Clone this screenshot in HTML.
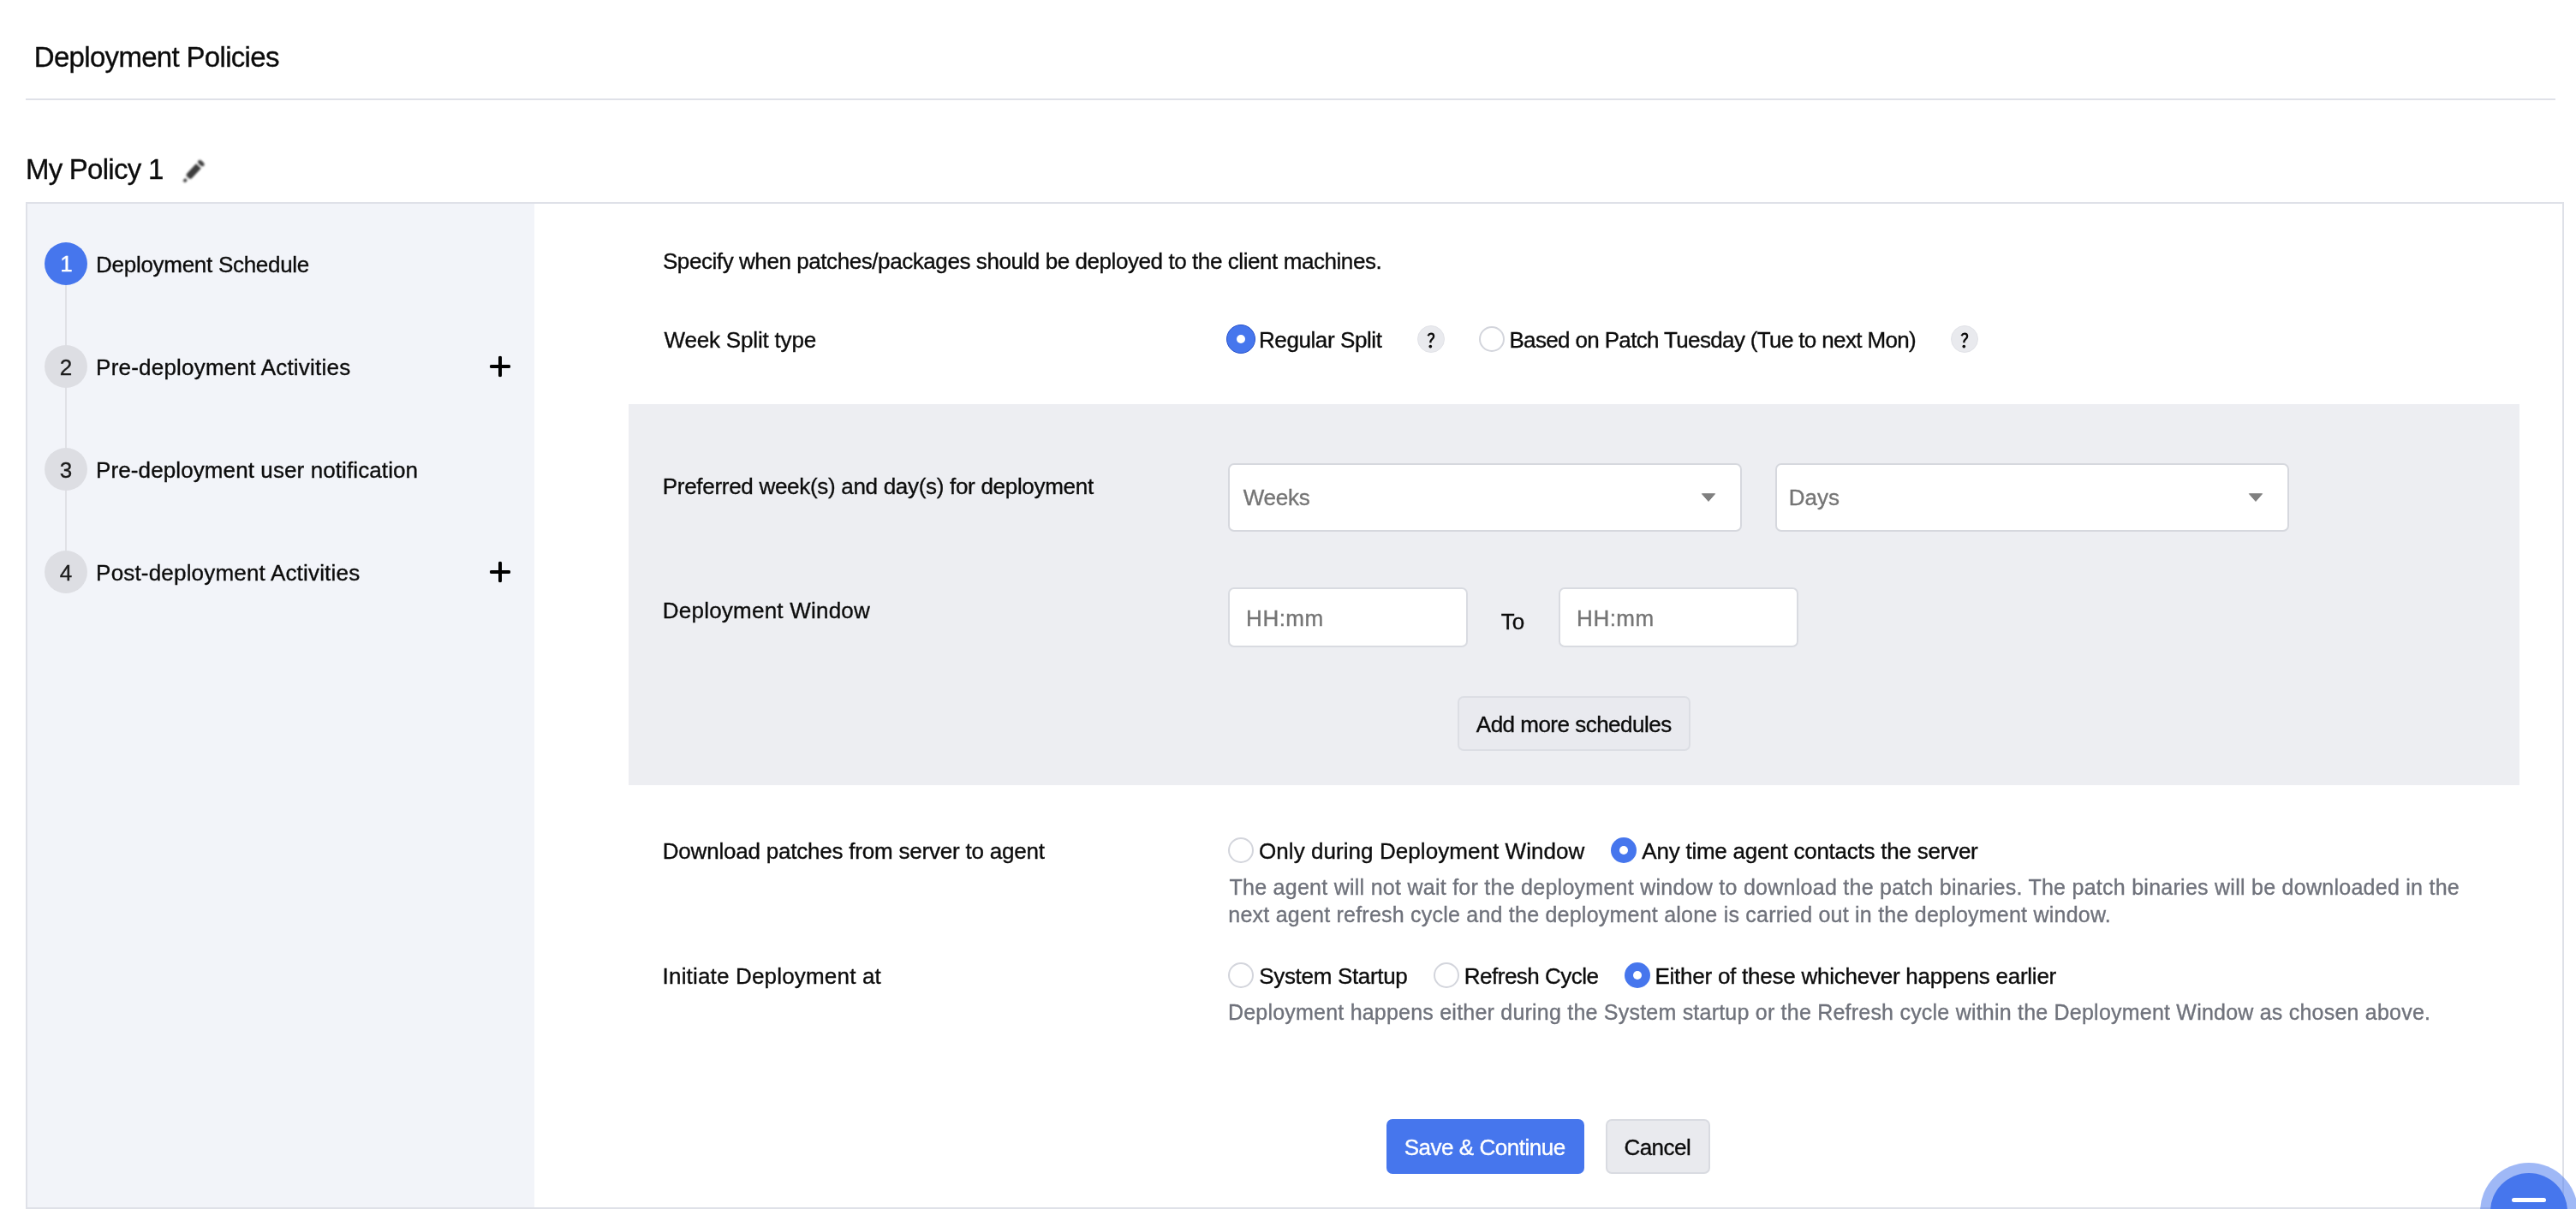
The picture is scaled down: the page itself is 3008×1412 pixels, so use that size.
<!DOCTYPE html>
<html lang="en"><head><meta charset="utf-8"><title>Deployment Policies</title>
<style>
html,body{margin:0;padding:0;background:#fff;overflow:hidden;}
body{width:3008px;height:1412px;position:relative;font-family:"Liberation Sans",sans-serif;}
.t{-webkit-text-stroke:0.35px;position:absolute;white-space:nowrap;line-height:1;font-family:"Liberation Sans",sans-serif;}
.a{position:absolute;box-sizing:border-box;}
.circ{position:absolute;box-sizing:border-box;border-radius:50%;}
svg{position:absolute;overflow:visible;}
#txt{position:absolute;left:0;top:0;width:3008px;height:1412px;will-change:transform;}
#page{position:relative;width:3008px;height:1412px;overflow:hidden;background:#fff;}

</style></head>
<body>
<div id="page">
<!-- header rule -->
<div class="a" style="left:30px;top:115px;width:2954px;height:2px;background:#dfe1e8"></div>
<!-- panel -->
<div class="a" style="left:30px;top:236px;width:2964px;height:1176px;border:2px solid #dfe1e8;background:#fff"></div>
<!-- sidebar -->
<div class="a" style="left:32px;top:238px;width:592px;height:1172px;background:#f2f4f9"></div>
<!-- stepper line -->
<div class="a" style="left:76px;top:308px;width:2px;height:360px;background:#e0e1e6"></div>
<div class="circ" style="left:52px;top:283px;width:50px;height:50px;background:#4676ed"></div>
<div class="circ" style="left:52px;top:403px;width:50px;height:50px;background:#dddee3"></div>
<div class="circ" style="left:52px;top:523px;width:50px;height:50px;background:#dddee3"></div>
<div class="circ" style="left:52px;top:643px;width:50px;height:50px;background:#dddee3"></div>
<!-- plus icons -->
<svg style="left:572px;top:416px" width="24" height="24" viewBox="0 0 24 24"><path d="M12 1.8v20.4M1.8 12h20.4" stroke="#000" stroke-width="3.9" stroke-linecap="round" fill="none"/><path d="M12 0.6v22.8M0.6 12h22.8" stroke="#000" stroke-width="3.2" fill="none"/></svg>
<svg style="left:572px;top:656px" width="24" height="24" viewBox="0 0 24 24"><path d="M12 1.8v20.4M1.8 12h20.4" stroke="#000" stroke-width="3.9" stroke-linecap="round" fill="none"/><path d="M12 0.6v22.8M0.6 12h22.8" stroke="#000" stroke-width="3.2" fill="none"/></svg>
<!-- pencil -->
<svg style="left:0;top:0" width="300" height="260" viewBox="0 0 300 260">
 <defs><filter id="bl" x="-30%" y="-30%" width="160%" height="160%"><feGaussianBlur stdDeviation="1.05"/></filter></defs>
 <g transform="translate(216.2,210.7) rotate(-47)" fill="#3d3d3d" filter="url(#bl)">
  <ellipse cx="0" cy="0" rx="2.4" ry="2"/>
  <path d="M4.8 -2.4 L6.6 -3.9 H23.0 V3.9 H6.6 L4.8 2.4z"/>
  <ellipse cx="27.4" cy="0" rx="2.5" ry="4.4"/>
 </g>
</svg>
<!-- week split radios -->
<div class="circ" style="left:1432px;top:379px;width:34px;height:34px;background:#4676ed;border:1.5px solid #2752cc"></div>
<div class="circ" style="left:1443.8px;top:390.8px;width:10.4px;height:10.4px;background:#fff"></div>
<div class="circ" style="left:1655px;top:380px;width:32px;height:32px;background:#e9eaee;border:1px solid #e2e3e8"></div>
<div class="circ" style="left:1727px;top:381px;width:30px;height:30px;background:#fff;border:2px solid #d3d5dc"></div>
<div class="circ" style="left:2278px;top:380px;width:32px;height:32px;background:#e9eaee;border:1px solid #e2e3e8"></div>
<svg style="left:1665.7px;top:388.1px" width="10" height="19" viewBox="0 0 10 19"><path d="M1.5 4.2C2.4 2.55 3.6 1.6 5 1.6C6.9 1.6 8.15 2.9 8.15 4.7C8.15 6.4 7.2 7.3 6 8.3C5 9.1 4.4 9.8 4.4 11V12.3" stroke="#0c0c0c" stroke-width="2.3" fill="none"/><circle cx="4.3" cy="16.55" r="1.85" fill="#0c0c0c"/></svg>
<svg style="left:2289.3px;top:388.1px" width="10" height="19" viewBox="0 0 10 19"><path d="M1.5 4.2C2.4 2.55 3.6 1.6 5 1.6C6.9 1.6 8.15 2.9 8.15 4.7C8.15 6.4 7.2 7.3 6 8.3C5 9.1 4.4 9.8 4.4 11V12.3" stroke="#0c0c0c" stroke-width="2.3" fill="none"/><circle cx="4.3" cy="16.55" r="1.85" fill="#0c0c0c"/></svg>
<!-- grey schedule box -->
<div class="a" style="left:734px;top:472px;width:2208px;height:445px;background:#edeef2"></div>
<div class="a" style="left:1434px;top:541px;width:600px;height:80px;background:#fff;border:2px solid #d6d8de;border-radius:7px"></div>
<div class="a" style="left:2073px;top:541px;width:600px;height:80px;background:#fff;border:2px solid #d6d8de;border-radius:7px"></div>
<svg style="left:1986px;top:576px" width="18" height="10" viewBox="0 0 18 10"><path d="M1.4 0.7H16.6L9 9.4z" fill="#808080" stroke="#808080" stroke-width="1" stroke-linejoin="round"/></svg>
<svg style="left:2625px;top:576px" width="18" height="10" viewBox="0 0 18 10"><path d="M1.4 0.7H16.6L9 9.4z" fill="#808080" stroke="#808080" stroke-width="1" stroke-linejoin="round"/></svg>
<div class="a" style="left:1434px;top:686px;width:280px;height:70px;background:#fff;border:2px solid #d9dbe1;border-radius:7px"></div>
<div class="a" style="left:1820px;top:686px;width:280px;height:70px;background:#fff;border:2px solid #d9dbe1;border-radius:7px"></div>
<div class="a" style="left:1702px;top:813px;width:272px;height:64px;background:#e9eaef;border:2px solid #dcdee4;border-radius:7px"></div>
<!-- download radios -->
<div class="circ" style="left:1434px;top:978px;width:30px;height:30px;background:#fff;border:2px solid #d3d5dc"></div>
<div class="circ" style="left:1881px;top:978px;width:30px;height:30px;background:#4676ed"></div>
<div class="circ" style="left:1890.8px;top:987.8px;width:10.4px;height:10.4px;background:#fff"></div>
<!-- initiate radios -->
<div class="circ" style="left:1434px;top:1124px;width:30px;height:30px;background:#fff;border:2px solid #d3d5dc"></div>
<div class="circ" style="left:1674px;top:1124px;width:30px;height:30px;background:#fff;border:2px solid #d3d5dc"></div>
<div class="circ" style="left:1897px;top:1124px;width:30px;height:30px;background:#4676ed"></div>
<div class="circ" style="left:1906.8px;top:1133.8px;width:10.4px;height:10.4px;background:#fff"></div>
<!-- buttons -->
<div class="a" style="left:1619px;top:1307px;width:231px;height:64px;background:#4676ed;border-radius:7px"></div>
<div class="a" style="left:1875px;top:1307px;width:122px;height:64px;background:#e9eaee;border:2px solid #d9dbe1;border-radius:7px"></div>
<!-- floating chat button -->
<div class="circ" style="left:2896px;top:1358px;width:114px;height:114px;background:rgba(70,118,237,.52)"></div>
<div class="circ" style="left:2908px;top:1370px;width:90px;height:90px;background:#4676ed"></div>
<div class="a" style="left:2933px;top:1399px;width:40px;height:5px;background:#fff;border-radius:3px"></div>

<div id="txt">
<div class="t" style="left:39.78px;top:50px;font-size:33px;color:#0c0c0c;letter-spacing:-0.684px">Deployment Policies</div>
<div class="t" style="left:29.88px;top:181px;font-size:33px;color:#0c0c0c;letter-spacing:-0.732px">My Policy 1</div>
<div class="t" style="left:112.11px;top:296px;font-size:26px;color:#0c0c0c;letter-spacing:-0.289px">Deployment Schedule</div>
<div class="t" style="left:112.11px;top:416px;font-size:26px;color:#0c0c0c;letter-spacing:0.215px">Pre-deployment Activities</div>
<div class="t" style="left:112.11px;top:536px;font-size:26px;color:#0c0c0c;letter-spacing:0.099px">Pre-deployment user notification</div>
<div class="t" style="left:112.11px;top:656px;font-size:26px;color:#0c0c0c;letter-spacing:0.182px">Post-deployment Activities</div>
<div class="t" style="left:773.94px;top:292px;font-size:26px;color:#0c0c0c;letter-spacing:-0.427px">Specify when patches/packages should be deployed to the client machines.</div>
<div class="t" style="left:775.53px;top:384px;font-size:26px;color:#0c0c0c;letter-spacing:-0.179px">Week Split type</div>
<div class="t" style="left:1470.01px;top:384px;font-size:26px;color:#0c0c0c;letter-spacing:-0.414px">Regular Split</div>
<div class="t" style="left:1762.41px;top:384px;font-size:26px;color:#0c0c0c;letter-spacing:-0.648px">Based on Patch Tuesday (Tue to next Mon)</div>
<div class="t" style="left:773.81px;top:555px;font-size:26px;color:#0c0c0c;letter-spacing:-0.299px">Preferred week(s) and day(s) for deployment</div>
<div class="t" style="left:1451.73px;top:568px;font-size:26px;color:#757575;letter-spacing:-0.236px">Weeks</div>
<div class="t" style="left:2088.81px;top:568px;font-size:26px;color:#757575;letter-spacing:-0.046px">Days</div>
<div class="t" style="left:773.81px;top:700px;font-size:26px;color:#0c0c0c;letter-spacing:0.224px">Deployment Window</div>
<div class="t" style="left:1455.11px;top:709px;font-size:26px;color:#757575;letter-spacing:0.495px">HH:mm</div>
<div class="t" style="left:1752.75px;top:713px;font-size:26px;color:#0c0c0c;letter-spacing:0.002px">To</div>
<div class="t" style="left:1841.11px;top:709px;font-size:26px;color:#757575;letter-spacing:0.495px">HH:mm</div>
<div class="t" style="left:1723.84px;top:833px;font-size:26px;color:#0c0c0c;letter-spacing:-0.510px">Add more schedules</div>
<div class="t" style="left:773.81px;top:981px;font-size:26px;color:#0c0c0c;letter-spacing:-0.214px">Download patches from server to agent</div>
<div class="t" style="left:1470.00px;top:981px;font-size:26px;color:#0c0c0c;letter-spacing:0.061px">Only during Deployment Window</div>
<div class="t" style="left:1917.34px;top:981px;font-size:26px;color:#0c0c0c;letter-spacing:-0.238px">Any time agent contacts the server</div>
<div class="t" style="left:1435.47px;top:1024px;font-size:25px;color:#6f727b;letter-spacing:0.265px">The agent will not wait for the deployment window to download the patch binaries. The patch binaries will be downloaded in the</div>
<div class="t" style="left:1434.30px;top:1056px;font-size:25px;color:#6f727b;letter-spacing:0.226px">next agent refresh cycle and the deployment alone is carried out in the deployment window.</div>
<div class="t" style="left:773.62px;top:1127px;font-size:26px;color:#0c0c0c;letter-spacing:0.177px">Initiate Deployment at</div>
<div class="t" style="left:1470.24px;top:1127px;font-size:26px;color:#0c0c0c;letter-spacing:-0.320px">System Startup</div>
<div class="t" style="left:1709.81px;top:1127px;font-size:26px;color:#0c0c0c;letter-spacing:-0.503px">Refresh Cycle</div>
<div class="t" style="left:1932.41px;top:1127px;font-size:26px;color:#0c0c0c;letter-spacing:-0.238px">Either of these whichever happens earlier</div>
<div class="t" style="left:1433.89px;top:1170px;font-size:25px;color:#6f727b;letter-spacing:0.219px">Deployment happens either during the System startup or the Refresh cycle within the Deployment Window as chosen above.</div>
<div class="t" style="left:1639.74px;top:1327px;font-size:26px;color:#ffffff;letter-spacing:-0.481px">Save &amp; Continue</div>
<div class="t" style="left:1896.42px;top:1327px;font-size:26px;color:#0c0c0c;letter-spacing:-0.516px">Cancel</div>
<div class="t" style="left:70.26px;top:295px;font-size:26px;color:#ffffff;letter-spacing:0.000px">1</div>
<div class="t" style="left:69.72px;top:416px;font-size:26px;color:#1c1c1c;letter-spacing:0.000px">2</div>
<div class="t" style="left:69.70px;top:536px;font-size:26px;color:#1c1c1c;letter-spacing:0.000px">3</div>
<div class="t" style="left:69.82px;top:656px;font-size:26px;color:#1c1c1c;letter-spacing:0.000px">4</div>
</div>
</div>
</body></html>
